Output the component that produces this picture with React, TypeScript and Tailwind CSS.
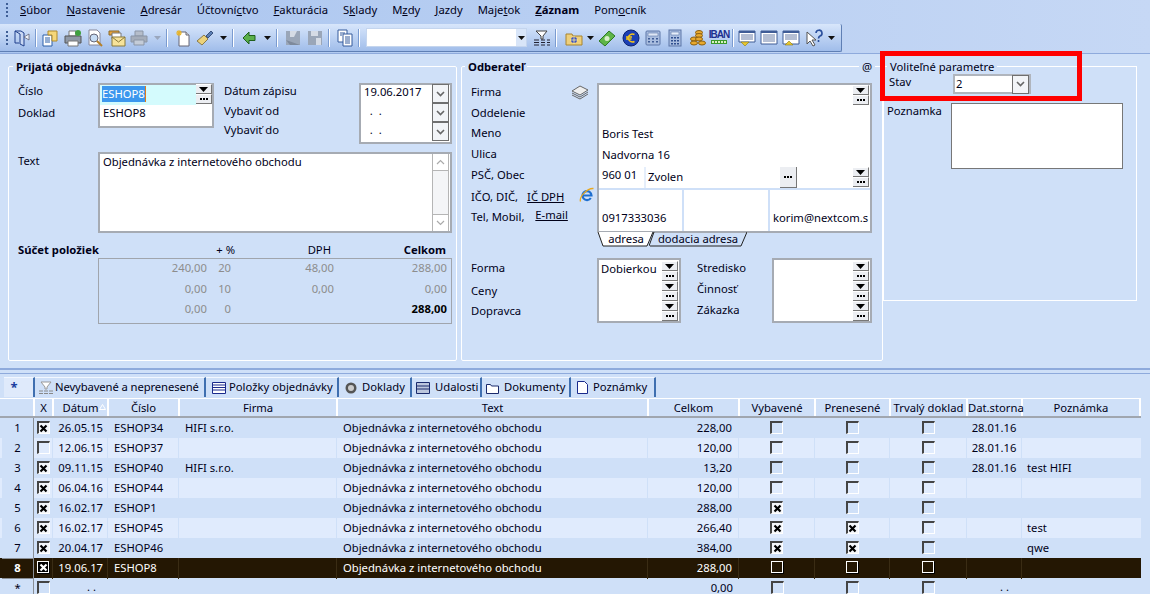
import React from "react";

const cx = (...a: (string | false | undefined)[]) => a.filter(Boolean).join(" ");

const U = ({ c }: { c: string }) => <span className="underline">{c}</span>;

const menu: [string, string, string, boolean?][] = [
  ["", "S", "úbor"], ["", "N", "astavenie"], ["", "A", "dresár"], ["Účtovní", "c", "tvo"], ["", "F", "akturácia"],
  ["S", "k", "lady"], ["M", "z", "dy"], ["", "J", "azdy"], ["Maje", "t", "ok"], ["", "Z", "áznam", true], ["Pom", "o", "cník"],
];

function Grip() {
  return <div className="flex flex-col gap-[2px] w-[2px] shrink-0">{[0, 1, 2, 3].map(i => <div key={i} className="w-[2px] h-[2px] bg-[#3f5f96]" />)}</div>;
}
function Sep() {
  return <div className="w-px h-[18px] bg-[#7a9bd0] border-r border-white box-content mx-[2px] shrink-0" />;
}
function Caret({ dim, wide }: { dim?: boolean; wide?: boolean }) {
  return <div className={cx("flex justify-center shrink-0", wide ? "w-[14px]" : "w-[11px]")}><svg width="7" height="4"><path d="M0 0h7L3.500 4z" fill={dim ? "#9aa7bd" : "#111"} /></svg></div>;
}
function Ico({ children }: { children: React.ReactNode }) {
  return <svg width="18" height="18" viewBox="0 0 18 18" className="shrink-0 mx-[2px]">{children}</svg>;
}
const S2 = () => <div className="w-[2px] shrink-0" />;
const S1 = () => <div className="w-px shrink-0" />;
const S4 = () => <div className="w-[4px] shrink-0" />;

function Toolbar() {
  return (
    <div className="flex items-center h-[28px] w-[842px] pl-[6px] rounded-r-[2px] bg-gradient-to-b from-[#d8e6fb] to-[#a0bdea] border-b border-r border-[#5f7fb4]">
      <Grip />
      <div className="ml-[3px] flex items-center">
        <Ico><path d="M2 2h6l3 2v13l-4-2V5L2 2z" fill="#c9d8f3" stroke="#1f3f8c" /><path d="M2 2v12h4" fill="none" stroke="#1f3f8c" /><path d="M11 8l5-3v6z" fill="#eef3fb" stroke="#556" strokeWidth=".7" /></Ico>
        <Sep />
        <Ico><path d="M2 6h9v11H2z" fill="#fff" stroke="#2a5fa8" /><path d="M7 2h9v10h-5V6H7z" fill="#f5d77a" stroke="#b08a2a" /><path d="M4 9h5M4 11h5M4 13h5" stroke="#2a5fa8" /></Ico>
        <S1 />
        <Ico><path d="M5 2h7v5H5z" fill="#fff" stroke="#777" /><path d="M1 7h16v7H1z" fill="#8f98a6" stroke="#555" /><path d="M4 12h10v5H4z" fill="#fff" stroke="#777" /><circle cx="14" cy="4" r="3" fill="#3f9f3f" /></Ico>
        <Ico><path d="M3 1h8l3 3v12H3z" fill="#fff" stroke="#889" /><circle cx="8" cy="9" r="4" fill="#c7ddf5" stroke="#667" /><path d="M11 12l5 5" stroke="#b5802a" strokeWidth="2" /></Ico>
        <Ico><path d="M1 2h10v4H1z" fill="#e8a33a" stroke="#8a6a2a" /><path d="M4 4h9v6H4z" fill="#fff" stroke="#777" /><path d="M4 8h13v9H4z" fill="#f7e39a" stroke="#8a7a3a" /><path d="M4 8l6.500 5L17 8" fill="none" stroke="#8a7a3a" /></Ico>
        <Ico><path d="M5 2h8v5H5z" fill="#b5bdca" stroke="#8b95a5" /><path d="M1 7h16v6H1z" fill="#a5adba" stroke="#8b95a5" /><path d="M4 11h10v5H4z" fill="#c4ccd8" stroke="#8b95a5" /></Ico>
        <Caret dim wide />
        <Sep />
        <S2 />
        <Ico><path d="M5 3h7l3 3v11H5z" fill="#fff" stroke="#667" /><path d="M12 3v3h3" fill="#ddd" stroke="#667" /><path d="M5 1v6M2 4h6M3 2l4 4M7 2L3 6" stroke="#e8b42a" strokeWidth="1.100" /></Ico>
        <Ico><path d="M1 12l7-6 4 4-6 6z" fill="#ecd27a" stroke="#8a7a4a" /><path d="M10 7l5-5 2 2-5 5z" fill="#5b7fb5" stroke="#3a527c" /></Ico>
        <Caret wide />
        <Sep />
        <S2 />
        <Ico><path d="M3 9l6-6v3.500h6v5H9V15z" fill="#5ab04a" stroke="#1f5f1c" /></Ico>
        <Caret wide />
        <Sep />
        <S2 />
        <Ico><path d="M2 2h14v14H2z" fill="#9aa6b8" /><path d="M6 2h7l-3 6H6z" fill="#d5dbe5" /><path d="M2 11l4 5h10" fill="#7e8a9c" /></Ico>
        <Ico><path d="M2 2h14v14H2z" fill="#9aa6b8" /><path d="M5 2h7v5H5zM10 9h5v7h-5z" fill="#d5dbe5" /></Ico>
        <Sep />
        <S2 />
        <Ico><path d="M2 1h9v12H2z" fill="#fff" stroke="#345a9c" /><path d="M7 5h9v12H7z" fill="#fff" stroke="#345a9c" /><path d="M9 8h5M9 10h5M9 12h5M9 14h5M4 4h5M4 6h2" stroke="#345a9c" /></Ico>
        <Sep />
        <S4 />
        <div className="w-[161px] h-[19px] bg-white flex items-center justify-end border border-[#c4d5ee] shrink-0">
          <div className="w-[11px] h-[17px] bg-[#d8e5f8] border-l border-white flex items-center justify-center"><svg width="7" height="4"><path d="M0 0h7L3.500 4z" fill="#111" /></svg></div>
        </div>
        <S4 />
        <Ico><path d="M3 2h11l-4 5v3H8V7z" fill="#fff" stroke="#444" /><path d="M1 11h5M8 11h4M14 11h3M1 13.500h5M8 13.500h4M14 13.500h3M1 16h5M8 16h4M14 16h3" stroke="#223" /></Ico>
        <Sep />
        <S4 />
        <Ico><path d="M1 5h6l1 2h9v9H1z" fill="#eecf7b" stroke="#a8842e" /><circle cx="9" cy="11" r="3" fill="#3a4fc0" /><path d="M9 7v8M5 11h8" stroke="#fff2a0" strokeWidth=".8" /></Ico>
        <Caret />
        <Ico><path d="M1 12L11 2l6 5-10 10z" fill="#5fb548" stroke="#2d7a22" /><circle cx="9" cy="9.500" r="2.500" fill="#d8f0c8" /></Ico>
        <S2 />
        <Ico><circle cx="9" cy="9" r="8" fill="#1b3fb5" stroke="#0d236f" /><path d="M12.500 5.500A4.500 4.500 0 0 0 6 9a4.500 4.500 0 0 0 6.500 3.500M4 8h6M4 10h5.500" fill="none" stroke="#f5c518" strokeWidth="1.500" /></Ico>
        <Ico><rect x="2" y="2" width="14" height="14" rx="1" fill="#a9bddf" stroke="#5d76a8" /><path d="M4 4h10v3H4z" fill="#dfe7f5" stroke="#5d76a8" strokeWidth=".6" /><path d="M4 9h2v1.500H4zM8 9h2v1.500H8zM12 9h2v1.500h-2zM4 12h2v1.500H4zM8 12h2v1.500H8zM12 12h2v1.500h-2z" fill="#3f5c96" /></Ico>
        <Ico><rect x="3" y="1" width="12" height="16" fill="#a9bddf" stroke="#5d76a8" /><path d="M5 3h8v3H5z" fill="#e6eefa" stroke="#5d76a8" strokeWidth=".6" /><path d="M5 8h2v1.500H5zM8 8h2v1.500H8zM11 8h2v1.500h-2zM5 11h2v1.500H5zM8 11h2v1.500H8zM11 11h2v1.500h-2zM5 14h2v1.500H5zM8 14h2v1.500H8zM11 14h2v1.500h-2z" fill="#2f4f8f" /></Ico>
        <Ico><ellipse cx="11" cy="3.500" rx="3.500" ry="2" fill="#e8a92e" stroke="#8a5f12" /><ellipse cx="11" cy="6.500" rx="3.500" ry="2" fill="#e8a92e" stroke="#8a5f12" /><ellipse cx="6" cy="10" rx="3.500" ry="2" fill="#e8a92e" stroke="#8a5f12" /><ellipse cx="11" cy="10" rx="3.500" ry="2" fill="#e8a92e" stroke="#8a5f12" /><ellipse cx="6" cy="14" rx="3.500" ry="2" fill="#e8a92e" stroke="#8a5f12" /><ellipse cx="14" cy="14" rx="3.500" ry="2" fill="#e8a92e" stroke="#8a5f12" /></Ico>
        <div className="w-[18px] h-[17px] mx-[2px] flex flex-col items-center justify-start shrink-0">
          <span className="text-[10px] leading-[11px] font-bold text-[#1c2f8f] tracking-[-1px] font-['Liberation_Sans',sans-serif]">IBAN</span>
          <div className="flex gap-px bg-[#3b9a2c] p-px">{[0, 1, 2, 3, 4].map(i => <div key={i} className="w-[2px] h-[2px] bg-[#d9f0c2]" />)}</div>
        </div>
        <Sep />
        <Ico><path d="M1 2h16v11H1z" fill="#fff" stroke="#3f5c96" /><path d="M1 3h16" stroke="#3f5c96" strokeWidth="2" /><path d="M3 6h12M3 8h12M3 10h12" stroke="#6a7fa8" /><path d="M3 13h8l-4 4z" fill="#e8c72e" stroke="#8a7a1a" strokeWidth=".6" /></Ico>
        <Ico><path d="M1 2h16v13H1z" fill="#fff" stroke="#3f5c96" /><path d="M1 3h16" stroke="#3f5c96" strokeWidth="2" /><path d="M3 6h12M3 8h12M3 10h12M3 12h12" stroke="#6a7fa8" /></Ico>
        <Ico><path d="M1 2h16v13H1z" fill="#fff" stroke="#3f5c96" /><path d="M1 3h16" stroke="#3f5c96" strokeWidth="2" /><path d="M3 6h12M3 8h12M3 10h12" stroke="#6a7fa8" /><path d="M3 16h8l-4-4z" fill="#e8c72e" stroke="#8a7a1a" strokeWidth=".6" /></Ico>
        <S2 />
        <Ico><path d="M1 3v12l3-3 3 5 2-1-3-5h4z" fill="#fff" stroke="#555" /><path d="M10 4a3 3 0 1 1 4 3c-1 .8-1.500 1-1.500 2.500M12.500 11v2" fill="none" stroke="#2a4f9c" strokeWidth="1.600" /></Ico>
        <Caret />
      </div>
    </div>
  );
}

const Dots = () => <div className="flex gap-px">{[0, 1, 2].map(i => <div key={i} className="w-[2px] h-[2px] bg-black" />)}</div>;

function Spin({ dots }: { dots?: boolean }) {
  return (
    <div className="w-[16px] h-[10px] bg-[#eceef2] border-r border-b border-[#777] border-t-white border-t flex items-center justify-center shrink-0">
      {dots ? <Dots /> : <svg width="9" height="5"><path d="M0 0h9L4.500 5z" fill="#000" /></svg>}
    </div>
  );
}
function Pair() {
  return <div className="flex flex-col shrink-0"><Spin /><Spin dots /></div>;
}
function Drop() {
  return (
    <div className="w-[17px] h-[19px] bg-[#f2f4f7] border border-[#6f6f6f] flex items-center justify-center shrink-0">
      <svg width="9" height="6"><path d="M1 1l3.500 3.500L8 1" fill="none" stroke="#666" strokeWidth="1.600" /></svg>
    </div>
  );
}

function Group({ title, bold, right, titleClass, className, children }: { title: string; bold?: boolean; right?: React.ReactNode; titleClass: string; className?: string; children: React.ReactNode }) {
  return (
    <div className={cx("relative border border-white rounded-[2px] shrink-0", className)}>
      <span className={cx("absolute -top-[8px] bg-[#cfe0f8] px-[3px] leading-[15px]", titleClass, bold && "font-bold")}>{title}</span>
      {right && <span className="absolute -top-[8px] right-[7px] bg-[#cfe0f8] px-[3px] leading-[15px]">{right}</span>}
      {children}
    </div>
  );
}

const Label = ({ children, className }: { children: React.ReactNode; className?: string }) => <div className={cx("leading-[15px] whitespace-nowrap", className)}>{children}</div>;
const Box = ({ children, className }: { children?: React.ReactNode; className?: string }) => <div className={cx("border-2 border-[#a6abb3] bg-white shrink-0", className)}>{children}</div>;

function Left() {
  return (
    <Group title="Prijatá objednávka" bold titleClass="left-[4px]" className="w-[449px] h-[295px] pl-[9px] pr-[4px] pt-[16px]">
      <div className="flex">
        <div className="w-[80px] flex flex-col gap-[7px]"><Label>Číslo</Label><Label>Doklad</Label></div>
        <Box className="w-[116px] h-[45px]">
          <div className="flex h-[20px]">
            <div className="flex-1 bg-[#d4fbfd] pl-[2px] leading-[15px] pt-px"><span className="bg-[#3c97ee] text-white border-r border-[#e07b1a] inline-block leading-[16px]">ESHOP8</span></div>
            <div className="-mt-px"><Pair /></div>
          </div>
          <div className="pl-[3px] leading-[15px]">ESHOP8</div>
        </Box>
        <div className="w-[145px] pl-[10px] flex flex-col gap-[4.500px]"><Label>Dátum zápisu</Label><Label>Vybaviť od</Label><Label>Vybaviť do</Label></div>
        <Box className="w-[93px] h-[61px] flex justify-between">
          <div className="pl-[3px] flex flex-col">
            {["19.06.2017", "  .  .", "  .  ."].map((d, i) => <div key={i} className="h-[19px] leading-[13px] whitespace-pre">{d}</div>)}
          </div>
          <div className="flex flex-col -mt-px mr-px"><Drop /><Drop /><Drop /></div>
        </Box>
      </div>
      <div className="flex mt-[8px]">
        <div className="w-[80px] pt-px"><Label>Text</Label></div>
        <Box className="w-[354px] h-[81px] flex justify-between">
          <div className="pl-[3px] leading-[15px]">Objednávka z internetového obchodu</div>
          <div className="w-[17px] mr-px border-l border-r border-[#b5b5b5] flex flex-col justify-between bg-[#f4f5f7]">
            <div className="h-[17px] border-b border-[#b5b5b5] flex items-center justify-center bg-white"><svg width="9" height="6"><path d="M1 5l3.500-3.500L8 5" fill="none" stroke="#aaa" strokeWidth="1.200" /></svg></div>
            <div className="h-[17px] border-t border-[#b5b5b5] flex items-center justify-center bg-white"><svg width="9" height="6"><path d="M1 1l3.500 3.500L8 1" fill="none" stroke="#aaa" strokeWidth="1.200" /></svg></div>
          </div>
        </Box>
      </div>
      <div className="flex mt-[9px] h-[15px] leading-[15px]">
        <div className="w-[80px] font-bold whitespace-nowrap">Súčet položiek</div>
        <div className="w-[354px] flex">
          <div className="w-[137px] text-right">+ %</div>
          <div className="w-[96px] text-right">DPH</div>
          <div className="w-[115px] text-right font-bold">Celkom</div>
        </div>
      </div>
      <div className="flex mt-px">
        <div className="w-[80px]" />
        <div className="w-[354px] h-[66px] border border-[#a0a5ad] shrink-0 text-[#8d8d8d] text-right">
          <div className="-mt-px grid grid-cols-[108px_24px_103px_113px] grid-rows-[20.500px_20.500px_20.500px] leading-[20.500px]">
            <div>240,00</div><div>20</div><div>48,00</div><div>288,00</div>
            <div>0,00</div><div>10</div><div>0,00</div><div>0,00</div>
            <div>0,00</div><div>0</div><div></div><div className="font-bold text-black">288,00</div>
          </div>
        </div>
      </div>
    </Group>
  );
}

function Middle() {
  return (
    <Group title="Odberateľ" bold right="@" titleClass="left-[3px]" className="w-[422px] h-[295px] pl-[9px] pt-[16px]">
      <div className="flex">
        <div className="w-[126px] flex flex-col pt-px leading-[15px]">
          <div className="relative h-[21px]">Firma
            <svg width="18" height="16" viewBox="0 0 18 16" className="absolute top-0 left-[100px]"><path d="M1 7l8-5 8 4-8 5z" fill="#eee" stroke="#666" /><path d="M1 9l8 4 8-5M1 11l8 4 8-5" fill="none" stroke="#666" /></svg>
          </div>
          <div className="h-[20px]">Oddelenie</div>
          <div className="h-[21px]">Meno</div>
          <div className="h-[21px]">Ulica</div>
          <div className="h-[22px]">PSČ, Obec</div>
          <div className="h-[20px] whitespace-nowrap relative">IČO, DIČ, <span className="underline ml-[6px]">IČ DPH</span>
            <svg width="16" height="16" viewBox="0 0 16 16" className="absolute left-[108px] top-[-2px]"><path d="M3.500 8.500h9A4.500 4.500 0 1 0 11.800 11" fill="none" stroke="#1e6fd0" strokeWidth="2.200" /><path d="M1.500 14.500C0 10 8 1 14.500 1.500" fill="none" stroke="#e8a820" strokeWidth="1.300" /></svg>
          </div>
          <div className="whitespace-nowrap">Tel, Mobil, <span className="underline relative -top-[2px] ml-[8px]">E-mail</span></div>
        </div>
        <div>
          <Box className="w-[275px] h-[150px] flex flex-col">
            <div className="h-[82px] flex flex-col shrink-0">
              <div className="flex justify-end h-[19px] mr-px"><Pair /></div>
              <div className="h-[19px]" />
              <div className="h-[21px] pl-[3px] leading-[21px]">Boris Test</div>
              <div className="h-[21px] pl-[3px] leading-[21px]">Nadvorna 16</div>
            </div>
            <div className="flex h-[23px] border-b-2 border-[#cfe0f8] shrink-0">
              <div className="w-[47px] pl-[3px] leading-[15px] border-r-2 border-[#e5eefb]">960 01</div>
              <div className="w-[134px] pl-[2px] leading-[19px]">Zvolen</div>
              <div className="w-[17px] h-[21px] bg-[#eceef2] border-r border-b border-[#777] flex items-center justify-center shrink-0"><Dots /></div>
              <div className="flex-1 flex justify-end mr-px"><Pair /></div>
            </div>
            <div className="flex flex-1">
              <div className="w-[85px] border-r-2 border-[#cfe0f8] pl-[3px] pt-[19px] leading-[18px]">0917333036</div>
              <div className="w-[86px] border-r-2 border-[#cfe0f8]" />
              <div className="w-[100px] pl-[3px] pt-[19px] leading-[18px] whitespace-nowrap">korim@nextcom.s</div>
            </div>
          </Box>
          <div className="flex h-[15px] leading-[13px] ml-px -mt-px">
            <div className="relative w-[56px] text-center">
              <svg className="absolute inset-0" width="56" height="15"><path d="M0 0l5 14h44L55 0" fill="#fff" stroke="#222" /></svg>
              <span className="relative">adresa</span>
            </div>
            <div className="relative w-[98px] text-center -ml-[5px]">
              <svg className="absolute inset-0" width="98" height="15"><path d="M0 14L5 0M1 14h91L98 0" fill="none" stroke="#222" /></svg>
              <span className="relative">dodacia adresa</span>
            </div>
          </div>
        </div>
      </div>
      <div className="flex mt-[11px]">
        <div className="w-[126px] flex flex-col gap-[8px] pt-[2px]"><Label>Forma</Label><Label>Ceny</Label><Label className="-mt-[3px]">Dopravca</Label></div>
        <Box className="w-[84px] h-[65px] flex justify-between"><div className="pl-[2px] leading-[15px] pt-[1px]">Dobierkou</div><div className="flex flex-col pt-px mr-px"><Pair /><Pair /><Pair /></div></Box>
        <div className="w-[91px] pl-[16px] flex flex-col gap-[6px] pt-[2px]"><Label>Stredisko</Label><Label>Činnosť</Label><Label>Zákazka</Label></div>
        <Box className="w-[100px] h-[65px] flex justify-end"><div className="flex flex-col pt-px mr-px"><Pair /><Pair /><Pair /></div></Box>
      </div>
    </Group>
  );
}

function Right() {
  return (
    <div className="relative w-[254px] h-[235px] border border-white shrink-0">
      <div className="absolute left-[-4px] top-[-16px] w-[202px] h-[50px] border-[5px] border-[#f00] pointer-events-none" />
      <span className="absolute -top-[8px] left-[3px] bg-[#cfe0f8] px-[3px] leading-[15px] whitespace-nowrap">Voliteľné parametre</span>
      <div className="flex pt-[7px] pl-[5px]">
        <div className="w-[64px] leading-[15px]">Stav</div>
        <div className="w-[78px] h-[20px] border-2 border-[#b0b5bd] bg-white flex justify-between items-center pl-[1px]">2<Drop /></div>
      </div>
      <div className="flex mt-[9px] pl-[3px]">
        <div className="w-[64px] leading-[15px]">Poznamka</div>
        <div className="w-[172px] h-[66px] border border-[#777] bg-white" />
      </div>
    </div>
  );
}

function Check({ on, dark }: { on?: boolean; dark?: boolean }) {
  return (
    <div className={cx("flex items-center justify-center mx-auto",
      dark ? "w-[12px] h-[12px] border border-white shadow-[1px_1px_0_#000]" : "w-[13px] h-[13px] border-t-2 border-l-2 border-r border-b border-t-[#444] border-l-[#444] border-r-white border-b-white",
      on && (dark ? "bg-black" : "bg-[#f4f6fa]"))}>
      {on && <svg width="9" height="9"><path d="M1.500 1.500l6 6M7.500 1.500l-6 6" stroke={dark ? "#fff" : "#000"} strokeWidth="2.200" /></svg>}
    </div>
  );
}

const tmpl = "grid-cols-[34px_19px_55px_71px_158px_311px_91px_76px_75px_77px_55px_119px]";
const heads = ["", "X", "Dátum", "Číslo", "Firma", "Text", "Celkom", "Vybavené", "Prenesené", "Trvalý doklad", "Dat.storna", "Poznámka"];
type R = [string, boolean, string, string, string, string, boolean, boolean, string, string];
const O = "Objednávka z internetového obchodu";
const rows: R[] = [
  ["26.05.15", true, "ESHOP34", "HIFI s.r.o.", "228,00", O, false, false, "28.01.16", ""],
  ["12.06.15", false, "ESHOP37", "", "120,00", O, false, false, "28.01.16", ""],
  ["09.11.15", true, "ESHOP40", "HIFI s.r.o.", "13,20", O, false, false, "28.01.16", "test HIFI"],
  ["06.04.16", true, "ESHOP44", "", "120,00", O, false, false, "", ""],
  ["16.02.17", true, "ESHOP1", "", "288,00", O, true, false, "", ""],
  ["16.02.17", true, "ESHOP45", "", "266,40", O, true, true, "", "test"],
  ["20.04.17", true, "ESHOP46", "", "384,00", O, true, true, "", "qwe"],
  ["19.06.17", true, "ESHOP8", "", "288,00", O, false, false, "", ""],
];

function Tab({ children, className }: { children: React.ReactNode; className: string }) {
  return <div className={cx("flex items-center h-[20px] border-r-2 border-[#3f6fb0] border-t border-t-[#f2f7ff] whitespace-nowrap shrink-0", className)}>{children}</div>;
}

function Grid() {
  return (
    <div className="w-[1141px]">
      <div className={cx("grid h-[20px] w-[1141px] pl-px leading-[17px] border-t border-b-2 border-t-white border-b-[#a0a6af]", "grid-cols-[34px_19px_55px_71px_158px_311px_91px_76px_75px_77px_55px_118px]")}>
        {heads.map((h, i) => (
          <div key={i} className="relative text-center border-r-2 border-r-white whitespace-nowrap">
            {h}
            {i === 2 && <svg width="7" height="6" className="absolute right-[1px] top-[5px]"><path d="M.5 5.500L3.500 .5l3 5z" fill="none" stroke="#fff" /></svg>}
          </div>
        ))}
      </div>
      {rows.map((r, i) => {
        const sel = i === 7;
        const alt = i % 2 === 1;
        const cell = sel ? "border-r border-[#3a2c14]" : "border-r border-[#cfe0f8]";
        return (
          <div key={i} className={cx("grid h-[20px] leading-[20px]", tmpl, sel ? "bg-[#241703] text-white" : alt ? "bg-[#e0ebfd]" : "bg-[#cfe0f8]")}>
            <div className={cx("text-center border-r border-b border-[#8a8f96] ml-[2px]", sel ? "font-bold" : "bg-[#cfe0f8]")}>{i + 1}</div>
            <div className={cx("pt-[3px]", cell)}><Check on={r[1]} dark={sel} /></div>
            <div className={cx("text-right pr-[4px]", cell)}>{r[0]}</div>
            <div className={cx("pl-[6px]", cell)}>{r[2]}</div>
            <div className={cx("pl-[6px]", cell)}>{r[3]}</div>
            <div className={cx("pl-[6px]", cell)}>{r[5]}</div>
            <div className={cx("text-right pr-[6px]", cell)}>{r[4]}</div>
            <div className={cx("pt-[3px]", cell)}><Check on={r[6]} dark={sel} /></div>
            <div className={cx("pt-[3px]", cell)}><Check on={r[7]} dark={sel} /></div>
            <div className={cx("pt-[3px]", cell)}><Check dark={sel} /></div>
            <div className={cx("text-center", cell)}>{r[8]}</div>
            <div className="pl-[5px]">{r[9]}</div>
          </div>
        );
      })}
      <div className={cx("grid h-[17px] leading-[20px]", tmpl)}>
        <div className="text-center border-r border-[#8a8f96] ml-[2px]">*</div>
        <div className="pt-[3px]"><Check /></div>
        <div className="text-right pr-[12px] leading-[17px]">. .</div><div /><div /><div />
        <div className="text-right pr-[6px]">0,00</div>
        <div className="pt-[3px]"><Check /></div><div className="pt-[3px]"><Check /></div><div className="pt-[3px]"><Check /></div>
        <div className="text-right pr-[13px] leading-[17px]">. .</div><div />
      </div>
    </div>
  );
}

export default function App() {
  return (
    <div className="w-[1150px] h-[594px] overflow-hidden bg-[#cfe0f8] text-[#000018] text-[11.250px] font-['Noto_Sans',sans-serif]">
      <div className="h-[23px] flex items-center pl-[6px] pb-[3px] bg-gradient-to-r from-[#aac5ef] to-[#c6d8f5]">
        <Grip />
        <div className="flex ml-[12px] gap-[15px] leading-[20px]">
          {menu.map(([a, b, c, bold], i) => <span key={i} className={cx("whitespace-nowrap", bold && "font-bold")}>{a}<U c={b} />{c}</span>)}
        </div>
      </div>
      <div className="h-[31px] bg-gradient-to-r from-[#aac5ef] to-[#c6d8f5] border-b border-[#8eaadc] pt-px"><Toolbar /></div>
      <div className="flex h-[316px] pl-[8px] pt-[12px] border-b-2 border-[#8eaadc]">
        <Left />
        <div className="w-[4px] shrink-0" />
        <Middle />
        <Right />
      </div>
      <div className="flex items-end h-[24px] border-t border-[#8eaadc] pl-[4px] mt-[3px] mb-px">
        <Tab className="w-[31px] pr-[9px] justify-center bg-[#dfeafb]"><span className="text-[#1a3fa0] font-bold text-[13px]">*</span></Tab>
        <Tab className="w-[171px] pl-[4px] gap-[2px] tracking-[-0.1px]"><svg width="14" height="14" viewBox="0 0 14 14"><path d="M2 1h10L8 6v2H6V6z" fill="#fff" stroke="#999" /><path d="M0 10h4M5 10h4M10 10h4M0 12.500h4M5 12.500h4M10 12.500h4" stroke="#888" /></svg>Nevybavené a neprenesené</Tab>
        <Tab className="w-[133px] pl-[6px] gap-[3px]"><svg width="14" height="12" viewBox="0 0 14 12"><path d="M.5.500h13v11H.500z" fill="#fff" stroke="#1a2a8c" /><path d="M1 3h12M1 5.500h12M1 8h12" stroke="#1a2a8c" /></svg>Položky objednávky</Tab>
        <Tab className="w-[73px] pl-[6px] gap-[5px]"><svg width="12" height="12" viewBox="0 0 12 12"><circle cx="6" cy="6" r="5.500" fill="#555" /><circle cx="6" cy="6" r="3" fill="#ccc" /></svg>Doklady</Tab>
        <Tab className="w-[70px] pl-[4px] gap-[5px]"><svg width="14" height="12" viewBox="0 0 14 12"><path d="M.5.500h13v11H.500z" fill="#bcc6dd" stroke="#1a2a6c" /><path d="M1 4h12M1 7h12" stroke="#1a2a6c" /></svg>Udalosti</Tab>
        <Tab className="w-[89px] pl-[4px] gap-[5px]"><svg width="13" height="12" viewBox="0 0 13 12"><path d="M.5 2.500h4l1 1.500h7v7.500H.500z" fill="#fff" stroke="#1a2a6c" /></svg>Dokumenty</Tab>
        <Tab className="w-[85px] pl-[6px] gap-[5px]"><svg width="11" height="13" viewBox="0 0 11 13"><path d="M.5.500h7l3 3v9H.500z" fill="#fff" stroke="#1a2a8c" /></svg>Poznámky</Tab>
      </div>
      <Grid />
    </div>
  );
}
